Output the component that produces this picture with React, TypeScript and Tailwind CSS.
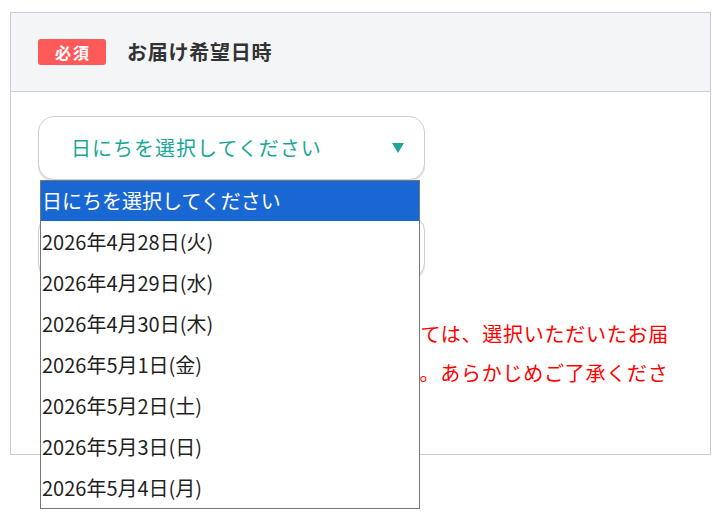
import { useState } from 'react';

const DATE_OPTIONS = [
  '2026年4月28日(火)',
  '2026年4月29日(水)',
  '2026年4月30日(木)',
  '2026年5月1日(金)',
  '2026年5月2日(土)',
  '2026年5月3日(日)',
  '2026年5月4日(月)',
];

const FONT = "font-['Noto_Sans_CJK_JP','Noto_Sans',sans-serif]";

function Caret() {
  return (
    <svg width="12" height="10" viewBox="0 0 12 10" aria-hidden className="shrink-0">
      <path d="M0 0 H12 L6 10 Z" fill="#1fa597" />
    </svg>
  );
}

function SelectBox({ label }: { label: string }) {
  return (
    <div className="flex h-[64px] w-[387px] items-center justify-between rounded-[16px] border border-[#cdcedb] bg-white pl-[32px] pr-[20px] shadow-[0_2px_1px_rgba(0,0,0,0.12)]">
      <span className="text-[20px] tracking-[1px] text-[#18a898]">{label}</span>
      <Caret />
    </div>
  );
}

function OptionList({ active }: { active: number }) {
  return (
    <ul className="absolute left-[29px] top-[167px] w-[380px] border border-[#767676] bg-white">
      {['日にちを選択してください', ...DATE_OPTIONS].map((opt, i) => (
        <li
          key={opt}
          className={
            i === active
              ? 'flex h-[40px] items-center bg-[#1967d2] pl-[1px] text-[20px] text-white'
              : 'flex h-[41px] items-center pl-[1px] text-[20px] text-[#1f1f1f]'
          }
        >
          {opt}
        </li>
      ))}
    </ul>
  );
}

export default function App() {
  const [active] = useState(0);

  return (
    <div className={`min-h-[519px] bg-white pl-[10px] pt-[12px] ${FONT}`}>
      <section className="relative w-[701px] border border-[#cbcbd9]">
        <header className="flex h-[79px] items-center gap-[21px] border-b border-[#cbcbd9] bg-[#f4f5f7] pl-[27px]">
          <span className="flex h-[26px] w-[68px] items-center justify-center rounded-[3px] bg-[#ff5a5a] pl-[2px] text-[16px] font-bold tracking-[2px] text-white">
            必須
          </span>
          <h2 className="text-[20px] font-bold tracking-[0.75px] text-[#333333]">お届け希望日時</h2>
        </header>

        <div className="relative flex flex-col pb-[23px] pl-[27px] pt-[24px]">
          <SelectBox label="日にちを選択してください" />
          <div className="mt-[35px]">
            <SelectBox label="時間帯を選択してください" />
          </div>
          <p className="ml-[10px] mt-[35px] text-[20px] leading-[39px] tracking-[0.75px] text-[#ff0000]">
            ※天候や交通事情、配送状況によりましては、選択いただいたお届
            <br />
            け日時にお届けできない場合があります。あらかじめご了承くださ
            <br />
            い。
          </p>
        </div>

        <OptionList active={active} />
      </section>
    </div>
  );
}
